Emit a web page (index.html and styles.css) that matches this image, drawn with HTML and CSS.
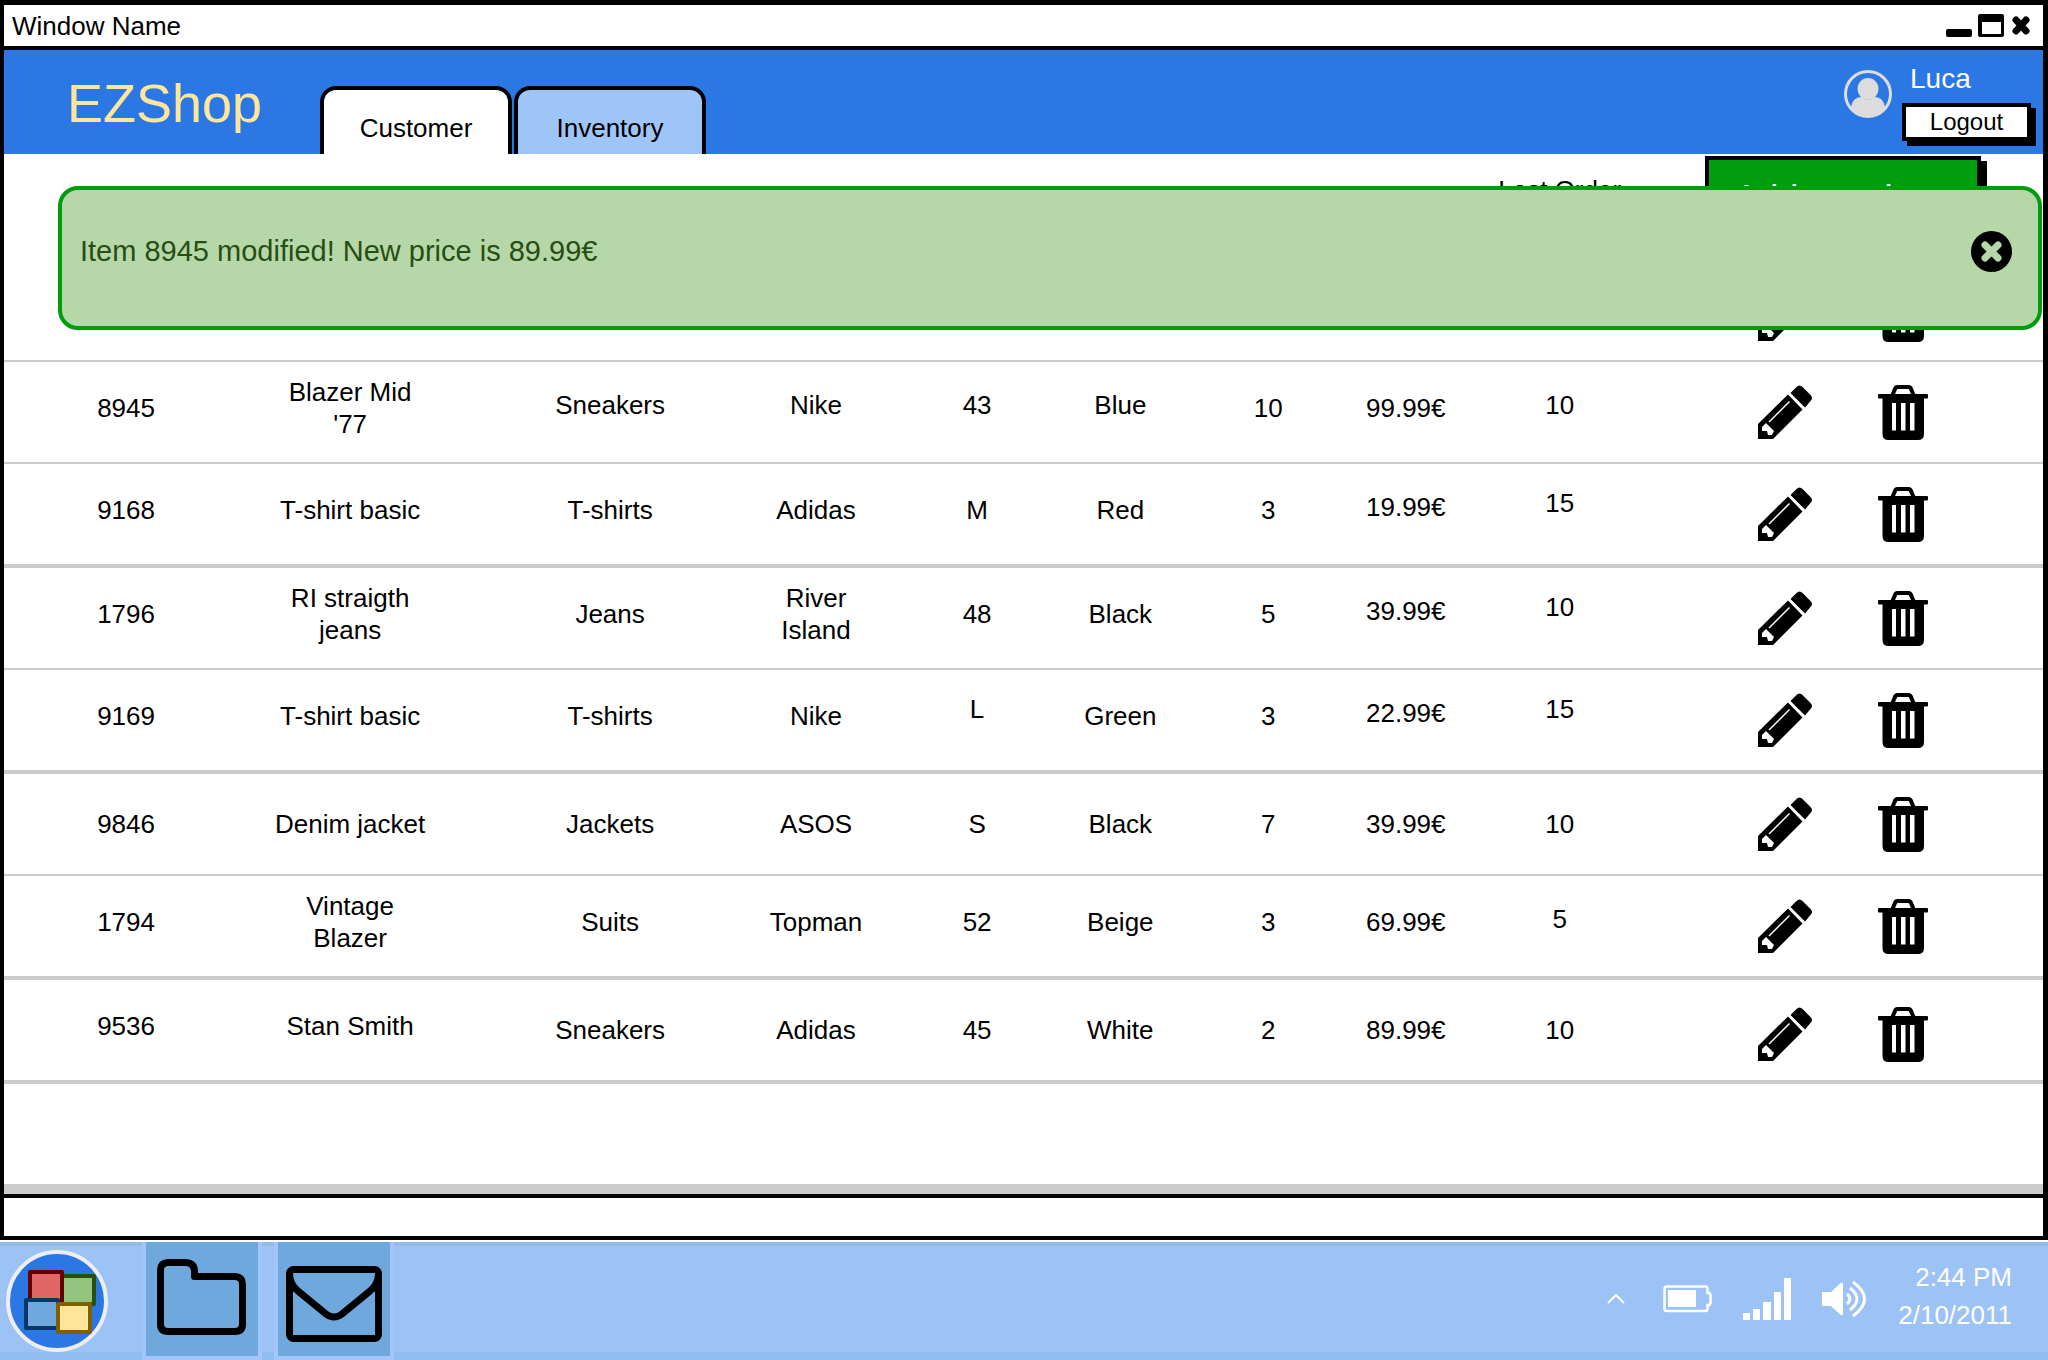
FILE: index.html
```html
<!DOCTYPE html>
<html lang="en">
<head>
<meta charset="utf-8">
<title>EZShop</title>
<link rel="stylesheet" href="styles.css">
</head>
<body>
<svg class="defs" aria-hidden="true">
  <symbol id="pencil" viewBox="0 0 54 54">
    <path d="M0 54V39L30 9.500 44.500 24.500 15 54z"/>
    <path d="M32.500 8 38.500 2Q41.500-1 44.500 2L52.500 10Q55.500 13 52.500 16L47 22.500z"/>
    <path d="M31.500 16.500 11 37" stroke="#fff" stroke-width="1.500"/>
    <path d="M8 38 16 46 14 50H10L9 46H4V42z" fill="#fff"/>
  </symbol>
  <symbol id="trash" viewBox="0 0 50 55">
    <path d="M14 11 17 4Q17.500 2 19.500 2H30.500Q32.500 2 33 4L36 11" fill="none" stroke="#000" stroke-width="4"/>
    <rect y="9" width="50" height="4.500" rx="1"/>
    <path fill-rule="evenodd" d="M4.500 12H46V49Q46 55 40 55H10.500Q4.500 55 4.500 49zM14 18V45.500H18V18zM23 18V45.500H27.500V18zM32 18V45.500H36.500V18z"/>
  </symbol>
</svg>

<div class="window">
  <div class="titlebar">
    <span>Window Name</span>
    <div class="controls">
      <button type="button" aria-label="Minimize"><svg width="26" height="24"><rect y="15" width="26" height="8" rx="2"/></svg></button>
      <button type="button" aria-label="Maximize"><svg width="26" height="24"><path fill-rule="evenodd" d="M2 0H24Q26 0 26 2V21Q26 23 24 23H2Q0 23 0 21V2Q0 0 2 0zM4 8V20H23V8z"/></svg></button>
      <button type="button" class="control-close" aria-label="Close"><svg width="18" height="24"><path d="M4 6 14 17M14 6 4 17" stroke="#000" stroke-width="7" stroke-linecap="round"/></svg></button>
    </div>
  </div>

  <header class="header">
    <h1 class="logo">EZShop</h1>
    <nav class="tabs">
      <a class="tab tab-active" href="#customer">Customer</a>
      <a class="tab" href="#inventory">Inventory</a>
    </nav>
    <div class="account">
      <svg class="avatar" width="48" height="48" viewBox="0 0 48 48" fill="#ddd">
        <clipPath id="face"><circle cx="24" cy="24" r="23"/></clipPath>
        <circle cx="24" cy="24" r="22.500" fill="none" stroke="#ddd" stroke-width="3"/>
        <path clip-path="url(#face)" d="M7 37Q9 27 17 27Q24 33 31 27Q39 27 41 37V48H7z"/>
        <ellipse cx="24" cy="19" rx="10.500" ry="11"/>
      </svg>
      <div class="account-info">
        <span class="user">Luca</span>
        <button type="button" class="logout">Logout</button>
      </div>
    </div>
  </header>

  <main class="content">
    <table class="items">
      <colgroup>
        <col class="c-id"><col class="c-name"><col class="c-type"><col class="c-brand"><col class="c-size"><col class="c-color"><col class="c-qty"><col class="c-price"><col class="c-order"><col>
      </colgroup>
      <thead>
        <tr><th></th><th></th><th></th><th></th><th></th><th></th><th></th><th></th><th>Last Order</th><th class="actions"><button type="button" class="add">Add new item</button></th></tr>
      </thead>
      <tbody>
        <tr><td></td><td></td><td></td><td></td><td></td><td></td><td></td><td></td><td></td><td class="actions low"><button type="button" aria-label="Edit"><svg width="54" height="54"><use href="#pencil"/></svg></button><button type="button" aria-label="Delete"><svg width="50" height="55"><use href="#trash"/></svg></button></td></tr>
        <tr><td>8945</td><td>Blazer Mid '77</td><td class="up">Sneakers</td><td class="up">Nike</td><td class="up">43</td><td class="up">Blue</td><td>10</td><td>99.99€</td><td class="up">10</td><td class="actions"><button type="button" aria-label="Edit 8945"><svg width="54" height="54"><use href="#pencil"/></svg></button><button type="button" aria-label="Delete 8945"><svg width="50" height="55"><use href="#trash"/></svg></button></td></tr>
        <tr class="heavy"><td>9168</td><td>T-shirt basic</td><td>T-shirts</td><td>Adidas</td><td>M</td><td>Red</td><td>3</td><td class="up">19.99€</td><td class="upper">15</td><td class="actions"><button type="button" aria-label="Edit 9168"><svg width="54" height="54"><use href="#pencil"/></svg></button><button type="button" aria-label="Delete 9168"><svg width="50" height="55"><use href="#trash"/></svg></button></td></tr>
        <tr><td>1796</td><td>RI straigth jeans</td><td>Jeans</td><td>River Island</td><td>48</td><td>Black</td><td>5</td><td class="up">39.99€</td><td class="upper">10</td><td class="actions"><button type="button" aria-label="Edit 1796"><svg width="54" height="54"><use href="#pencil"/></svg></button><button type="button" aria-label="Delete 1796"><svg width="50" height="55"><use href="#trash"/></svg></button></td></tr>
        <tr class="heavy"><td>9169</td><td>T-shirt basic</td><td>T-shirts</td><td>Nike</td><td class="upper">L</td><td>Green</td><td>3</td><td class="up">22.99€</td><td class="upper">15</td><td class="actions"><button type="button" aria-label="Edit 9169"><svg width="54" height="54"><use href="#pencil"/></svg></button><button type="button" aria-label="Delete 9169"><svg width="50" height="55"><use href="#trash"/></svg></button></td></tr>
        <tr class="down"><td>9846</td><td>Denim jacket</td><td>Jackets</td><td>ASOS</td><td>S</td><td>Black</td><td>7</td><td>39.99€</td><td>10</td><td class="actions"><button type="button" aria-label="Edit 9846"><svg width="54" height="54"><use href="#pencil"/></svg></button><button type="button" aria-label="Delete 9846"><svg width="50" height="55"><use href="#trash"/></svg></button></td></tr>
        <tr class="heavy"><td>1794</td><td>Vintage Blazer</td><td>Suits</td><td>Topman</td><td>52</td><td>Beige</td><td>3</td><td>69.99€</td><td class="up">5</td><td class="actions"><button type="button" aria-label="Edit 1794"><svg width="54" height="54"><use href="#pencil"/></svg></button><button type="button" aria-label="Delete 1794"><svg width="50" height="55"><use href="#trash"/></svg></button></td></tr>
        <tr class="heavy down"><td class="up">9536</td><td class="up">Stan Smith</td><td>Sneakers</td><td>Adidas</td><td>45</td><td>White</td><td>2</td><td>89.99€</td><td>10</td><td class="actions low"><button type="button" aria-label="Edit 9536"><svg width="54" height="54"><use href="#pencil"/></svg></button><button type="button" aria-label="Delete 9536"><svg width="50" height="55"><use href="#trash"/></svg></button></td></tr>
      </tbody>
    </table>

    <div class="toast" role="status">
      <span>Item 8945 modified! New price is 89.99€</span>
      <button type="button" aria-label="Dismiss"><svg width="41" height="41" viewBox="0 0 41 41"><circle cx="20.500" cy="20.500" r="20.500"/><path d="M14 14 27 27M27 14 14 27" stroke="#b6d7a8" stroke-width="7" stroke-linecap="round"/></svg></button>
    </div>
  </main>
  <div class="statusbar"></div>
</div>

<footer class="taskbar">
  <button type="button" class="start" aria-label="Start">
    <svg width="102" height="102" viewBox="0 0 102 102">
      <circle cx="51" cy="51" r="49" fill="#2b78e4" stroke="#eee" stroke-width="4"/>
      <g stroke-width="4" stroke-linejoin="round">
        <rect x="56" y="26" width="32" height="28" fill="#93c47d" stroke="#274e13"/>
        <rect x="24" y="22" width="32" height="32" fill="#e06666" stroke="#660000"/>
        <rect x="20" y="50" width="32" height="28" fill="#6fa8dc" stroke="#073763"/>
        <rect x="52" y="54" width="32" height="28" fill="#ffe599" stroke="#7f6000"/>
      </g>
    </svg>
  </button>
  <button type="button" class="task" aria-label="Files">
    <svg width="90" height="76" viewBox="0 0 90 76" fill="none" stroke="#000" stroke-width="7" stroke-linejoin="round"><path d="M11 3.500H28Q37 3.500 37.500 12V17.500H78Q85.500 18 85.500 25V65Q85.500 72.500 78 72.500H11Q3.500 72.500 3.500 65V11Q3.500 4 11 3.500z"/></svg>
  </button>
  <button type="button" class="task task-mail" aria-label="Mail">
    <svg width="96" height="76" viewBox="0 0 96 76" fill="none" stroke="#000" stroke-width="7"><rect x="3.500" y="3.500" width="89" height="69" rx="4"/><path d="M3.500 8Q4 19 12 25L40 48Q48 54 56 48L84 25Q92 19 92.500 8"/></svg>
  </button>
  <div class="tray">
    <svg width="18" height="12" viewBox="0 0 18 12"><path d="M1 10 9 2 17 10" fill="none" stroke="#fff" stroke-width="2"/></svg>
    <svg class="battery" width="49" height="28" viewBox="0 0 49 28"><path d="M4 1.500H42.500Q44.500 1.500 44.500 4V8H46.500L47.500 10V18L46.500 20H44.500V24Q44.500 26 42.500 26H4Q1.500 26 1.500 24V4Q1.500 1.500 4 1.500z" fill="none" stroke="#fff" stroke-width="2.500"/><rect x="5" y="5" width="28" height="17" fill="#fff"/></svg>
    <svg width="48" height="42" viewBox="0 0 48 42" fill="#fff"><path d="M0 35h7v7H0zM10 31h7v11h-7zM20 24h8v18h-8zM31 14h7v28h-7zM41 0h7v42h-7z"/></svg>
    <svg width="45" height="38" viewBox="0 0 45 38"><path d="M0 12H9L18 3.500Q21 2 21 4V34Q21 36 18 34.500L9 26H0z" fill="#fff"/><path d="M25 14Q31 19 25 24M28 8Q42 19 28 30M31 2Q54 19 31 36" fill="none" stroke="#fff" stroke-width="3"/></svg>
    <div class="clock"><span>2:44 PM</span><span>2/10/2011</span></div>
  </div>
</footer>
</body>
</html>
```
FILE: styles.css
```css
* { box-sizing: border-box; }

body {
  margin: 0;
  min-height: 100vh;
  display: flex;
  flex-direction: column;
  background: #fff;
  color: #000;
  font: 26px/32px "Liberation Sans", Arial, sans-serif;
}

svg { display: block; flex: none; }
.defs { position: absolute; width: 0; height: 0; }

button {
  margin: 0;
  padding: 0;
  border: 0;
  background: none;
  color: inherit;
  font: inherit;
  cursor: pointer;
}

.window {
  flex: 1;
  display: flex;
  flex-direction: column;
  margin-bottom: 2px;
  border: 4px solid #000;
  border-top-width: 5px;
  border-right-width: 5px;
}

.titlebar {
  display: flex;
  align-items: center;
  justify-content: space-between;
  height: 45px;
  padding: 0 13px 0 8px;
  border-bottom: 4px solid #000;
}
.controls { display: flex; gap: 6px; }
.control-close { margin-left: 2px; }

.header {
  display: flex;
  height: 104px;
  padding: 0 12px 0 63px;
  background: #2b78e4;
}
.logo {
  width: 253px;
  margin: 0;
  padding-top: 23px;
  color: #ffe599;
  font-size: 54px;
  font-weight: 400;
  line-height: 60px;
}
.tabs { display: flex; align-items: flex-end; gap: 2px; }
.tab {
  width: 192px;
  height: 68px;
  padding-top: 22px;
  border: 4px solid #000;
  border-bottom: 0;
  border-radius: 16px 16px 0 0;
  background: #9fc5f8;
  color: #000;
  text-align: center;
  text-decoration: none;
}
.tab-active { background: #fff; }

.account { display: flex; gap: 10px; margin-left: auto; }
.avatar { margin-top: 20px; }
.account-info { display: flex; flex-direction: column; align-items: flex-start; padding-top: 13px; }
.user { padding-left: 8px; color: #fff; font-size: 28px; }
.logout {
  width: 129px;
  height: 38px;
  margin-top: 8px;
  border: 4px solid #000;
  background: #fff;
  box-shadow: 5px 5px 0 #000;
  font-size: 24px;
  line-height: 28px;
}

.content {
  position: relative;
  flex: 1;
  border-bottom: 10px solid #ccc;
}

.items { width: 100%; table-layout: fixed; border-collapse: separate; border-spacing: 0; }
.c-id { width: 10.5%; }
.c-name { width: 12.95%; }
.c-type { width: 12.55%; }
.c-brand { width: 7.65%; }
.c-size { width: 8.15%; }
.c-color { width: 5.9%; }
.c-qty { width: 8.6%; }
.c-price { width: 4.9%; }
.c-order { width: 10.2%; }

.items th { height: 106px; padding: 20px 0 0; font-weight: 400; vertical-align: top; }
.items th.actions { padding: 2px 20px 0 0; vertical-align: top; }
.items td {
  height: 102px;
  padding: 0 0 8px;
  border-bottom: 2px solid #ccc;
  text-align: center;
  vertical-align: middle;
}
.items .heavy td { height: 104px; border-bottom-width: 4px; }
.items td:nth-child(1) { padding-left: 30px; }
.items td:nth-child(2) { padding-left: 55px; padding-right: 55px; }
.items td:nth-child(4) { padding-left: 20px; padding-right: 20px; }
.items .down td { padding-bottom: 0; }
.items td.up { padding-bottom: 14px; }
.items .down td.up { padding-bottom: 8px; }
.items td.upper { padding-bottom: 22px; }
.items td.actions { padding: 0 20px 0 0; }
.items td.low { padding-top: 8px; }
.actions button { vertical-align: middle; }
.actions button + button { margin-left: 66px; }

.actions .add {
  width: 276px;
  height: 80px;
  padding-top: 6px;
  border: 4px solid #000;
  background: #009e0f;
  box-shadow: 6px 5px 0 #000;
  color: #fff;
  font-size: 36px;
}

/* Message laid over the top of the table */
.toast {
  position: absolute;
  top: 32px;
  left: 54px;
  right: 1px;
  display: flex;
  align-items: center;
  justify-content: space-between;
  height: 144px;
  padding: 0 26px 14px 18px;
  border: 4px solid #009e0f;
  border-radius: 20px;
  background: #b6d7a8;
  color: #274e13;
  font-size: 29px;
}

.statusbar { height: 42px; border-top: 4px solid #000; }

.taskbar {
  display: flex;
  align-items: flex-start;
  min-height: 118px;
  padding: 0 36px 0 6px;
  border-top: 4px solid #94bde4;
  border-bottom: 8px solid #92bdf1;
  background: #9dc2f5;
}
.start { margin: 4px 34px 0 0; }
.task {
  display: flex;
  justify-content: center;
  width: 120px;
  height: 118px;
  margin: -4px 12px -8px 0;
  padding-top: 17px;
  border: 4px solid #a4c5fb;
  border-top: 0;
  background: #6fa8dc;
}
.task-mail { padding-top: 24px; }
.tray {
  display: flex;
  align-items: center;
  gap: 31px;
  margin-left: auto;
  padding-top: 12px;
  color: #fff;
}
.battery { margin-left: 7px; }
.clock { display: flex; flex-direction: column; padding-bottom: 6px; text-align: right; line-height: 38px; }
```
